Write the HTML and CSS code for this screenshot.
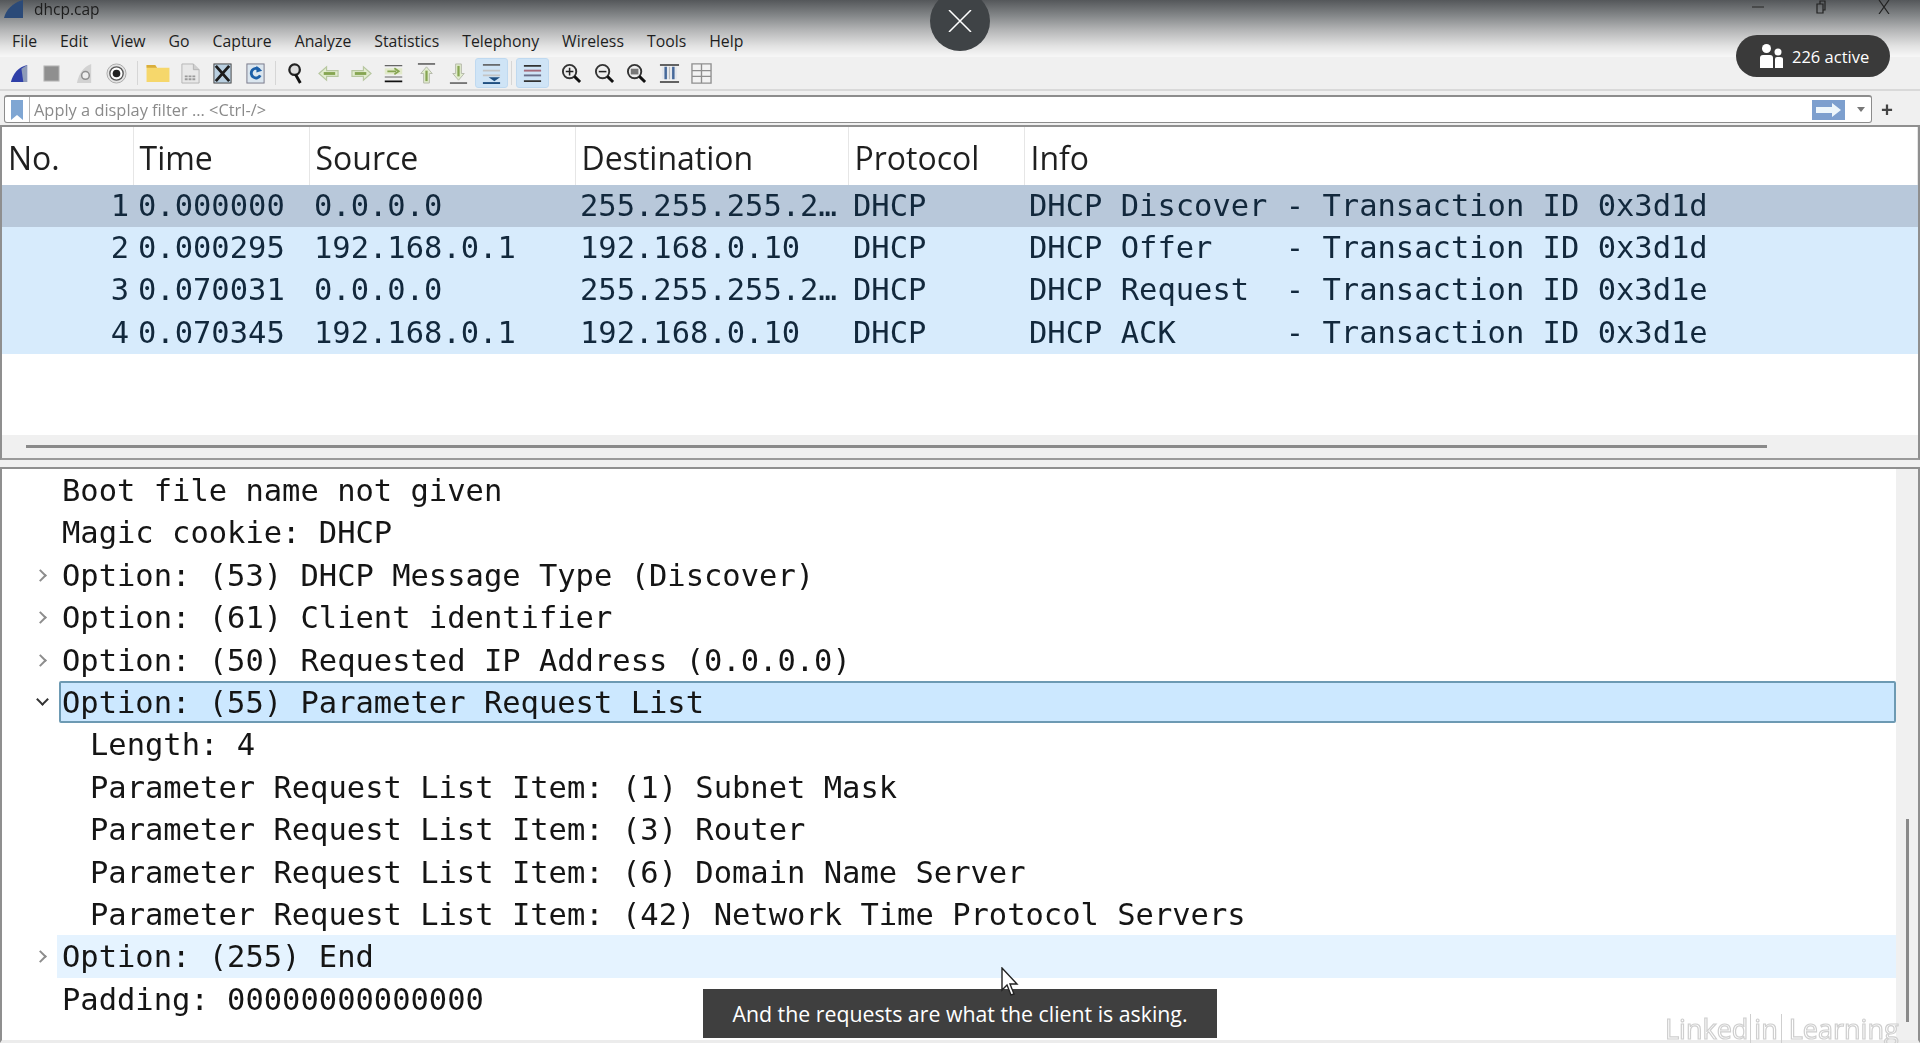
FILE: index.html
```html
<!DOCTYPE html>
<html lang="en">
<head>
    <meta charset="UTF-8">
    <title>dhcp.cap</title>
    <link rel="stylesheet" href="styles.css">
</head>
<body>
    <div class="app">
        <header class="top">
            <div class="titlebar">
                <svg class="app-icon" viewBox="0 0 22 18"><path d="M1 18C3 10 9 3 20 0V18Z" fill="#2b4a78"/></svg>
                <span class="title">dhcp.cap</span>
                <div class="win-controls">
                    <svg viewBox="0 0 14 14"><path d="M1 7H13" stroke="#333" stroke-width="1.2"/></svg>
                    <svg viewBox="0 0 14 14"><path d="M3 4H9V13H3ZM6 4V1H11V10H9" fill="none" stroke="#222" stroke-width="1.2"/></svg>
                    <svg viewBox="0 0 14 14"><path d="M2 0L12 14M12 0L2 14" stroke="#222" stroke-width="1.2"/></svg>
                </div>
            </div>
            <nav class="menu">
                <span>File</span><span>Edit</span><span>View</span><span>Go</span><span>Capture</span><span>Analyze</span><span>Statistics</span><span>Telephony</span><span>Wireless</span><span>Tools</span><span>Help</span>
            </nav>
        </header>

        <div class="toolbar">
            <span class="tool"><svg viewBox="0 0 22 22"><path d="M2 20C4 11 10 4 19 2V20Z" fill="#2f3fa8"/><path d="M13 6L19 2V20H15Z" fill="#8e9bb8"/></svg></span>
            <span class="tool"><svg viewBox="0 0 22 22"><rect x="3" y="3" width="16" height="16" fill="#8f8f8f" stroke="#c4c4c4"/></svg></span>
            <span class="tool"><svg viewBox="0 0 22 22"><path d="M3 21C5 11 10 4 18 1V21Z" fill="#d2d2d2"/><circle cx="12" cy="13" r="4" fill="#eee" stroke="#8f8f8f" stroke-width="1.6"/></svg></span>
            <span class="tool"><svg viewBox="0 0 22 22"><circle cx="11" cy="11" r="10" fill="#e4e4e4" stroke="#aaa"/><circle cx="11" cy="11" r="7" fill="#fff" stroke="#555" stroke-width="1.4"/><circle cx="11" cy="11" r="4" fill="#222"/></svg></span>
            <span class="tool-sep"></span>
            <span class="tool tool-wide"><svg viewBox="0 0 26 22"><path d="M1 2H10L12 5H25V20H1Z" fill="#f6d76b"/><path d="M1 2H10L12 5H1Z" fill="#d9ae3c"/></svg></span>
            <span class="tool"><svg viewBox="0 0 22 22"><path d="M2 1H14L20 7V21H2Z" fill="#e8e8e8" stroke="#b5b5b5"/><path d="M14 1V7H20" fill="#cfcfcf" stroke="#b5b5b5"/><path d="M5 14H17M5 17H17" stroke="#9a9a9a" stroke-width="2" stroke-dasharray="3 1"/></svg></span>
            <span class="tool"><svg viewBox="0 0 22 22"><rect x="2" y="1" width="18" height="20" fill="#b9cfe0" stroke="#444"/><path d="M4 3L18 19M18 3L4 19" stroke="#1c1c1c" stroke-width="3"/></svg></span>
            <span class="tool"><svg viewBox="0 0 22 22"><rect x="2" y="1" width="18" height="20" fill="#dbe6ef" stroke="#778"/><path d="M15 7A5 5 0 1 0 16 13" fill="none" stroke="#1c5fa8" stroke-width="3"/><path d="M12 3L18 8L12 10Z" fill="#1c5fa8"/></svg></span>
            <span class="tool-sep"></span>
            <span class="tool"><svg viewBox="0 0 22 22"><circle cx="9" cy="7" r="5.5" fill="#ddd" stroke="#222" stroke-width="2.4"/><path d="M10 12L15 21" stroke="#111" stroke-width="3"/></svg></span>
            <span class="tool"><svg viewBox="0 0 22 22"><path d="M1 11L9 4V8H21V14H9V18Z" fill="#e2edcf" stroke="#b7c7a0" stroke-width="1.2"/><path d="M6 11H18" stroke="#86a552" stroke-width="3"/></svg></span>
            <span class="tool"><svg viewBox="0 0 22 22"><path d="M21 11L13 4V8H1V14H13V18Z" fill="#e2edcf" stroke="#b7c7a0" stroke-width="1.2"/><path d="M4 11H16" stroke="#86a552" stroke-width="3"/></svg></span>
            <span class="tool"><svg viewBox="0 0 24 22"><path d="M2 2H22M2 15H22" stroke="#666" stroke-width="1.4"/><path d="M2 20H22" stroke="#111" stroke-width="2"/><rect x="2" y="5" width="20" height="7" fill="#e2eacb"/><path d="M5 8.5H15M13 5L18 8.5L13 12" fill="none" stroke="#86a552" stroke-width="2"/></svg></span>
            <span class="tool"><svg viewBox="0 0 22 22"><path d="M2 1H20" stroke="#444" stroke-width="1.4"/><path d="M11 4L17 11H14V21H8V11H5Z" fill="#e2edcf" stroke="#b4b9aa"/><path d="M11 8V19" stroke="#86a552" stroke-width="2.4"/></svg></span>
            <span class="tool"><svg viewBox="0 0 22 22"><path d="M2 21H20" stroke="#444" stroke-width="1.4"/><path d="M11 18L17 11H14V1H8V11H5Z" fill="#e2edcf" stroke="#b4b9aa"/><path d="M11 3V14" stroke="#86a552" stroke-width="2.4"/></svg></span>
            <span class="tool tool-on"><svg viewBox="0 0 22 22"><path d="M2 2H20" stroke="#555" stroke-width="1.6"/><path d="M2 8H20M2 13H20" stroke="#c4c4c4" stroke-width="2"/><path d="M8 15H20L14 19Z" fill="#1f4f80"/><path d="M2 21H20" stroke="#1f4f80" stroke-width="2"/></svg></span>
            <span class="tool-sep"></span>
            <span class="tool tool-on"><svg viewBox="0 0 22 22"><path d="M2 3H20M2 19H20" stroke="#333" stroke-width="1.8"/><path d="M2 8H20" stroke="#a56a7a" stroke-width="2"/><path d="M2 13H20" stroke="#6a6f8a" stroke-width="2"/></svg></span>
            <span class="tool-gap"></span>
            <span class="tool"><svg viewBox="0 0 22 22"><circle cx="9" cy="9" r="7" fill="#eee" stroke="#333" stroke-width="2"/><path d="M5 9H13M9 5V13" stroke="#222" stroke-width="1.6"/><path d="M14 14L20 20" stroke="#111" stroke-width="3"/></svg></span>
            <span class="tool"><svg viewBox="0 0 22 22"><circle cx="9" cy="9" r="7" fill="#eee" stroke="#333" stroke-width="2"/><path d="M5 9H13" stroke="#222" stroke-width="1.6"/><path d="M14 14L20 20" stroke="#111" stroke-width="3"/></svg></span>
            <span class="tool"><svg viewBox="0 0 22 22"><circle cx="9" cy="9" r="7" fill="#eee" stroke="#333" stroke-width="2"/><rect x="5" y="6" width="8" height="6" fill="#777"/><path d="M14 14L20 20" stroke="#111" stroke-width="3"/></svg></span>
            <span class="tool"><svg viewBox="0 0 22 22"><path d="M1 2H21M1 20H21" stroke="#333" stroke-width="1.6"/><path d="M3 4H19V17H3Z" fill="#e4e7ec"/><path d="M7 4V17M15 4V17" stroke="#47699a" stroke-width="2.6"/><path d="M11 4V17" stroke="#b9b9b9"/></svg></span>
            <span class="tool"><svg viewBox="0 0 22 22"><path d="M1 1H21V21H1ZM1 8H21M1 14H21M11 1V21" fill="#f2f2f2" stroke="#8e8e8e" stroke-width="1.4"/></svg></span>
        </div>

        <div class="filter-row">
            <div class="filter">
                <span class="bookmark"><svg viewBox="0 0 12 20"><path d="M0 0H12V20L6 15L0 20Z" fill="#7fa6d3"/></svg></span>
                <span class="filter-hint">Apply a display filter ... &lt;Ctrl-/&gt;</span>
                <span class="apply"><svg viewBox="0 0 33 20"><rect width="33" height="20" fill="#7d9fce"/><path d="M4 7H20V3L29 10L20 17V13H4Z" fill="#eef6fb"/></svg></span>
                <span class="drop"></span>
            </div>
            <span class="plus">+</span>
        </div>

        <section class="pane packets">
            <table class="packet-table">
                <colgroup>
                    <col class="c-no"><col class="c-time"><col class="c-src"><col class="c-dst"><col class="c-proto"><col>
                </colgroup>
                <thead>
                    <tr><th>No.</th><th>Time</th><th>Source</th><th>Destination</th><th>Protocol</th><th>Info</th></tr>
                </thead>
                <tbody>
                    <tr class="current"><td class="num">1</td><td>0.000000</td><td>0.0.0.0</td><td>255.255.255.2…</td><td>DHCP</td><td>DHCP Discover - Transaction ID 0x3d1d</td></tr>
                    <tr><td class="num">2</td><td>0.000295</td><td>192.168.0.1</td><td>192.168.0.10</td><td>DHCP</td><td>DHCP Offer    - Transaction ID 0x3d1d</td></tr>
                    <tr><td class="num">3</td><td>0.070031</td><td>0.0.0.0</td><td>255.255.255.2…</td><td>DHCP</td><td>DHCP Request  - Transaction ID 0x3d1e</td></tr>
                    <tr><td class="num">4</td><td>0.070345</td><td>192.168.0.1</td><td>192.168.0.10</td><td>DHCP</td><td>DHCP ACK      - Transaction ID 0x3d1e</td></tr>
                </tbody>
            </table>
            <div class="hscroll"><div class="hthumb"></div></div>
        </section>

        <section class="pane details">
            <div class="tree">
                <div class="row"><span class="twist"></span><span class="label">Boot file name not given</span></div>
                <div class="row"><span class="twist"></span><span class="label">Magic cookie: DHCP</span></div>
                <div class="row"><span class="twist closed"></span><span class="label">Option: (53) DHCP Message Type (Discover)</span></div>
                <div class="row"><span class="twist closed"></span><span class="label">Option: (61) Client identifier</span></div>
                <div class="row"><span class="twist closed"></span><span class="label">Option: (50) Requested IP Address (0.0.0.0)</span></div>
                <div class="row selected"><span class="twist open"></span><span class="label">Option: (55) Parameter Request List</span></div>
                <div class="row child"><span class="twist"></span><span class="label">Length: 4</span></div>
                <div class="row child"><span class="twist"></span><span class="label">Parameter Request List Item: (1) Subnet Mask</span></div>
                <div class="row child"><span class="twist"></span><span class="label">Parameter Request List Item: (3) Router</span></div>
                <div class="row child"><span class="twist"></span><span class="label">Parameter Request List Item: (6) Domain Name Server</span></div>
                <div class="row child"><span class="twist"></span><span class="label">Parameter Request List Item: (42) Network Time Protocol Servers</span></div>
                <div class="row hover"><span class="twist closed"></span><span class="label">Option: (255) End</span></div>
                <div class="row"><span class="twist"></span><span class="label">Padding: 00000000000000</span></div>
            </div>
            <div class="vscroll"><div class="vthumb"></div></div>
        </section>
    </div>

    <!-- video player overlays -->
    <button class="close-video" type="button"><svg viewBox="0 0 24 22"><path d="M1 0L23 22M23 0L1 22" stroke="#fff" stroke-width="1.5"/></svg></button>
    <div class="active-pill">
        <svg viewBox="0 0 24 24"><circle cx="7.5" cy="4.5" r="4.5" fill="#fff"/><circle cx="19" cy="8" r="3.5" fill="#fff"/><path d="M1 24V14Q1 11 4 11H11Q14 11 14 14V24Z" fill="#fff"/><path d="M16 24V15Q16 13 18 13H21Q24 13 24 15V24Z" fill="#fff"/></svg>
        <span>226 active</span>
    </div>
    <div class="watermark">Linked<span class="in">in</span> Learning</div>
    <div class="subtitle">And the requests are what the client is asking.</div>
    <svg class="cursor" viewBox="0 0 18 30"><path d="M1 1V23L6 18L10 28L13 27L9 17H16Z" fill="#fff" stroke="#222" stroke-width="1.4"/></svg>
</body>
</html>
```

FILE: styles.css
```css
html, body {
    margin: 0;
    height: 100%;
    overflow: hidden;
}
body {
    position: relative;
    background: #f0f0f0;
    font-family: 'Open Sans', 'Noto Sans', sans-serif;
}
.app {
    height: 1043px;
    display: flex;
    flex-direction: column;
    filter: blur(0.45px);
}

/* title bar and menu */
.top {
    height: 57px;
    background: linear-gradient(#54575a 0, #85888a 16px, #b4b5b6 30px, #e2e2e2 46px, #f6f6f6 56px);
}
.titlebar {
    height: 20px;
    display: flex;
    align-items: flex-start;
    position: relative;
}
.app-icon {
    width: 22px;
    height: 18px;
    margin-left: 3px;
}
.title {
    margin-left: 9px;
    font-size: 15.5px;
    line-height: 18px;
    color: #1d1d1d;
}
.win-controls {
    display: flex;
    margin-left: auto;
    gap: 49px;
    padding: 0 29px 0 0;
}
.win-controls svg {
    width: 14px;
    height: 14px;
}
.menu {
    display: flex;
    gap: 23px;
    padding: 11px 0 0 12px;
    font-size: 15.8px;
    line-height: 20px;
    color: #1e1e1e;
}

/* toolbar */
.toolbar {
    height: 32px;
    padding-left: 3px;
    display: flex;
    align-items: center;
    border-bottom: 2px solid #d9d9d9;
}
.tool {
    width: 32.5px;
    height: 30px;
    flex: none;
    display: flex;
    align-items: center;
    justify-content: center;
    box-sizing: border-box;
}
.tool svg {
    width: 21px;
    height: 21px;
}
.tool-wide svg {
    width: 26px;
}
.tool-on {
    background: #cfe4f6;
    border: 1px solid #bfd9f0;
    border-radius: 3px;
}
.tool-sep {
    width: 8.5px;
    height: 24px;
    flex: none;
    background: linear-gradient(#d6d6d6, #d6d6d6) center / 1px 100% no-repeat;
}
.tool-gap {
    width: 7px;
    flex: none;
}

/* display filter */
.filter-row {
    height: 34px;
    display: flex;
    align-items: center;
    padding: 2px 0 0 4px;
    box-sizing: border-box;
}
.filter {
    width: 1868px;
    height: 28px;
    box-sizing: border-box;
    display: flex;
    align-items: center;
    background: #fff;
    border: 1px solid #8c8c8c;
    border-top-width: 2px;
    border-radius: 3px;
}
.bookmark {
    width: 24px;
    height: 100%;
    display: flex;
    align-items: center;
    justify-content: center;
    border-right: 1px solid #b5b5b5;
}
.bookmark svg {
    width: 12px;
    height: 20px;
}
.filter-hint {
    margin-left: 4px;
    font-size: 16.4px;
    color: #8a8a8a;
    flex: 1;
}
.apply svg {
    display: block;
    width: 33px;
    height: 20px;
}
.drop {
    width: 0;
    height: 0;
    margin: 0 6px 0 12px;
    border-left: 4px solid transparent;
    border-right: 4px solid transparent;
    border-top: 5px solid #777;
}
.plus {
    margin-left: 9px;
    font-size: 21px;
    font-weight: 700;
    line-height: 20px;
    color: #444;
}

/* panes */
.pane {
    border: 2px solid #8f8f8f;
    border-bottom: 0;
    background: #fff;
}
.packets {
    height: 335px;
    box-sizing: border-box;
    display: flex;
    flex-direction: column;
    border-bottom: 2px solid #9a9a9a;
}
.details {
    margin-top: 7px;
    flex: 1;
    display: flex;
    min-height: 0;
    border-bottom: 3px solid #ececec;
}
.packet-table {
    width: 100%;
    table-layout: fixed;
    border-collapse: collapse;
}
.c-no { width: 131px; }
.c-time { width: 176px; }
.c-src { width: 266px; }
.c-dst { width: 273px; }
.c-proto { width: 176px; }
.packet-table th {
    height: 56px;
    padding: 2px 0 0 6px;
    text-align: left;
    font-weight: 400;
    font-size: 32px;
    color: #1f1f1f;
    border-right: 1px solid #e6e6e6;
}
.packet-table td {
    height: 41.3px;
    padding: 0 0 1px 5px;
    font-family: 'DejaVu Sans Mono', 'Liberation Mono', monospace;
    font-size: 30.47px;
    line-height: 40px;
    white-space: pre;
    color: #12283c;
    background: #d7ebfc;
    overflow: hidden;
}
.packet-table tr.current td {
    background: #b8c8da;
}
.packet-table td.num {
    text-align: right;
    padding: 0 4px 1px 0;
}
.hscroll {
    margin-top: auto;
    height: 23px;
    padding: 10px 0 0 24px;
    box-sizing: border-box;
    background: #f0f0f0;
}
.hthumb {
    width: 1741px;
    height: 3px;
    background: #8a8a8a;
}

/* packet details tree */
.tree {
    flex: 1;
    min-width: 0;
    overflow: hidden;
}
.row {
    height: 42.4px;
    display: flex;
    font-family: 'DejaVu Sans Mono', 'Liberation Mono', monospace;
    font-size: 30.47px;
    line-height: 44px;
    color: #151515;
    white-space: pre;
}
.twist {
    width: 57px;
    flex: none;
    position: relative;
}
.twist.closed::after,
.twist.open::after {
    content: "";
    position: absolute;
    top: 17px;
    left: 34px;
    width: 7px;
    height: 7px;
    border-top: 2px solid #8d8d8d;
    border-right: 2px solid #8d8d8d;
    transform: rotate(45deg);
}
.twist.open::after {
    top: 14px;
    left: 36px;
    border-color: #333;
    transform: rotate(135deg);
}
.label {
    flex: 1;
    padding-left: 3px;
    box-sizing: border-box;
}
.child .label {
    padding-left: 31px;
}
.selected .label {
    background: #cce8ff;
    border: 2px solid #6d9ab3;
    border-radius: 2px;
    padding-left: 1px;
    line-height: 40px;
}
.hover .label {
    background: #e5f3ff;
    margin-left: -2px;
    padding-left: 5px;
}
.vscroll {
    width: 22px;
    flex: none;
    padding: 350px 0 0 10px;
    box-sizing: border-box;
    background: #f0f0f0;
}
.vthumb {
    width: 3px;
    height: 203px;
    background: #8a8a8a;
}

/* overlays from the video player */
.close-video {
    position: absolute;
    top: -9px;
    left: 930px;
    width: 60px;
    height: 60px;
    padding: 0;
    border: 0;
    border-radius: 50%;
    background: #3f4346;
    display: flex;
    align-items: center;
    justify-content: center;
}
.close-video svg {
    width: 24px;
    height: 22px;
}
.active-pill {
    position: absolute;
    top: 35px;
    left: 1736px;
    width: 154px;
    height: 42px;
    box-sizing: border-box;
    padding-left: 23px;
    display: flex;
    align-items: center;
    gap: 9px;
    border-radius: 21px;
    background: #3a3a3a;
    color: #fff;
    font-size: 16.5px;
}
.active-pill svg {
    width: 24px;
    height: 24px;
}
.watermark {
    position: absolute;
    left: 1665px;
    top: 1014px;
    height: 29px;
    overflow: hidden;
    font-size: 27px;
    line-height: 30px;
    font-weight: 400;
    white-space: nowrap;
    color: transparent;
    -webkit-text-stroke: 1.2px #cfcfcf;
}
.watermark .in {
    border: 1px solid #cfcfcf;
    padding: 0 3px;
    margin-left: 2px;
}
.subtitle {
    position: absolute;
    left: 703px;
    top: 989px;
    width: 514px;
    height: 49px;
    background: #3f3f3f;
    color: #fff;
    font-size: 21.3px;
    line-height: 49px;
    text-align: center;
    white-space: nowrap;
}
.cursor {
    position: absolute;
    left: 1001px;
    top: 967px;
    width: 18px;
    height: 30px;
}
```
